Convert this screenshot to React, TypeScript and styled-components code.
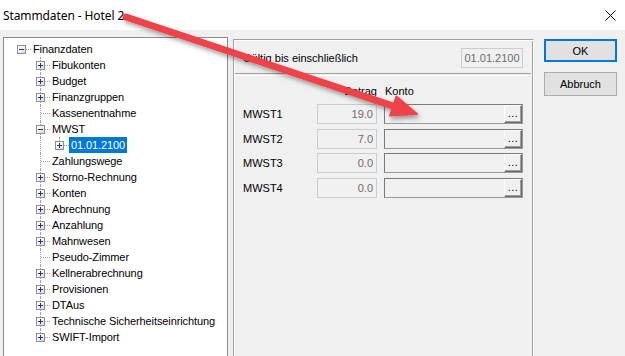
import React from "react";
import styled, { createGlobalStyle } from "styled-components";

const Global = createGlobalStyle`
  html, body { margin: 0; padding: 0; }
  body {
    width: 625px; height: 356px; overflow: hidden;
    background: #f0f0f0;
    font-family: "Liberation Sans", Arial, sans-serif;
    font-size: 11px; color: #000;
  }
`;

const Window = styled.div`
  position: relative;
  width: 625px;
  height: 356px;
  overflow: hidden;
  background: #f0f0f0;
`;

const TitleBar = styled.div`
  height: 30px;
  background: #fff;
  display: flex;
  align-items: center;
  justify-content: space-between;
  padding: 0 9px 0 3px;
`;

const Title = styled.span`
  font-family: "Noto Sans", "Open Sans", sans-serif;
  font-size: 12px;
  color: #000;
  letter-spacing: -0.1px;
`;

const CloseBtn = styled.div`
  width: 12px;
  height: 12px;
  display: flex;
  align-items: center;
  justify-content: center;
`;

const Body = styled.div`
  display: flex;
  align-items: flex-start;
  padding-left: 3px;
`;

const TreePanel = styled.div`
  box-sizing: border-box;
  width: 225px;
  height: 340px;
  margin-top: 7px;
  background: #fff;
  border: 1px solid #8c8c8c;
  padding-top: 3px;
  flex: none;
`;

const TreeRow = styled.div`
  display: flex;
  height: 16px;
  padding-left: 8px;
`;

const Indent = styled.div<{ $line: boolean }>`
  position: relative;
  width: 19px;
  height: 16px;
  flex: none;
  &::before {
    content: "";
    display: ${(p) => (p.$line ? "block" : "none")};
    position: absolute;
    left: 9px;
    top: 0;
    height: 16px;
    border-left: 1px dotted #a0a0a0;
  }
`;

const Gutter = styled.div<{ $vertical: "none" | "full" | "half" }>`
  position: relative;
  width: 19px;
  height: 16px;
  flex: none;
  &::before {
    content: "";
    display: ${(p) => (p.$vertical === "none" ? "none" : "block")};
    position: absolute;
    left: 9px;
    top: 0;
    height: ${(p) => (p.$vertical === "half" ? "8px" : "16px")};
    border-left: 1px dotted #a0a0a0;
  }
  &::after {
    content: "";
    position: absolute;
    left: 10px;
    top: 8px;
    width: 9px;
    border-top: 1px dotted #a0a0a0;
  }
`;

const ExpandBox = styled.span<{ $open: boolean }>`
  position: absolute;
  left: 5px;
  top: 4px;
  width: 9px;
  height: 9px;
  box-sizing: border-box;
  border: 1px solid #8f8f8f;
  background: linear-gradient(135deg, #ffffff 0%, #f2f2f2 50%, #d6d6d6 100%);
  z-index: 1;
  &::before {
    content: "";
    position: absolute;
    left: 1px;
    top: 3px;
    width: 5px;
    height: 1px;
    background: #1f3a7a;
  }
  &::after {
    content: "";
    display: ${(p) => (p.$open ? "none" : "block")};
    position: absolute;
    left: 3px;
    top: 1px;
    width: 1px;
    height: 5px;
    background: #1f3a7a;
  }
`;

const TreeLabel = styled.span<{ $selected?: boolean }>`
  height: 16px;
  line-height: 16px;
  padding: 0 2px;
  white-space: nowrap;
  letter-spacing: -0.1px;
  background: ${(p) => (p.$selected ? "#0078d7" : "transparent")};
  color: ${(p) => (p.$selected ? "#fff" : "#000")};
`;

const Panel = styled.div`
  box-sizing: border-box;
  width: 301px;
  height: 330px;
  margin-top: 9px;
  margin-left: 5px;
  flex: none;
  border: 1px solid;
  border-color: #a0a0a0 #ffffff #ffffff #a0a0a0;
  box-shadow: inset 1px 1px #ffffff, inset -1px -1px #a0a0a0;
  padding: 8px 10px 0 9px;
`;

const HeaderRow = styled.div`
  display: flex;
  align-items: center;
  justify-content: space-between;
  height: 20px;
`;

const DisabledField = styled.div<{ $w: number; $center?: boolean }>`
  box-sizing: border-box;
  width: ${(p) => p.$w}px;
  height: 20px;
  border: 1px solid #cccccc;
  background: #f0f0f0;
  color: #6d6d6d;
  line-height: 18px;
  text-align: ${(p) => (p.$center ? "center" : "right")};
  padding-right: ${(p) => (p.$center ? "0" : "3px")};
`;

const Separator = styled.div`
  margin: 5px -8px 0 -8px;
  height: 1px;
  border-top: 1px solid #a0a0a0;
  border-bottom: 1px solid #ffffff;
`;

const Grid = styled.div`
  display: grid;
  grid-template-columns: 67px 60px 139px;
  column-gap: 7px;
  row-gap: 4.7px;
  grid-auto-rows: 20px;
  align-items: center;
`;

const ColHeads = styled(Grid)`
  margin-top: 8px;
  grid-auto-rows: 14px;
  margin-bottom: 6px;
`;

const ColHead = styled.span<{ $right?: boolean }>`
  line-height: 14px;
  text-align: ${(p) => (p.$right ? "right" : "left")};
  padding-left: ${(p) => (p.$right ? "0" : "1px")};
`;

const RowLabel = styled.span`
  line-height: 20px;
`;

const KontoField = styled.div`
  box-sizing: border-box;
  height: 20px;
  display: flex;
  justify-content: flex-end;
  border: 1px solid;
  border-color: #7a7a7a #9a9a9a #9a9a9a #7a7a7a;
  background: #f0f0f0;
`;

const DotsButton = styled.div`
  box-sizing: border-box;
  width: 18px;
  height: 18px;
  background: #f0f0f0;
  border: 1px solid;
  border-color: #ffffff #696969 #696969 #ffffff;
  box-shadow: inset -1px -1px #a0a0a0;
  font-size: 11px;
  line-height: 14px;
  text-align: center;
  letter-spacing: 0.5px;
  color: #000;
`;

const ButtonCol = styled.div`
  display: flex;
  flex-direction: column;
  gap: 10px;
  margin-top: 9px;
  margin-left: 10px;
`;

const DlgButton = styled.div<{ $default?: boolean }>`
  box-sizing: border-box;
  width: 73px;
  height: ${(p) => (p.$default ? "23px" : "24px")};
  background: #e1e1e1;
  border: ${(p) => (p.$default ? "2px solid #0078d7" : "1px solid #adadad")};
  display: flex;
  align-items: center;
  justify-content: center;
  font-size: 11px;
`;

const ArrowLayer = styled.svg`
  position: absolute;
  left: 0;
  top: 0;
  pointer-events: none;
`;

type Node = {
  label: string;
  box?: "plus" | "minus";
  last?: boolean;
  selected?: boolean;
  cont: boolean[];
};

const L1 = [false];

const tree: Node[] = [
  { label: "Finanzdaten", box: "minus", last: true, cont: [] },
  { label: "Fibukonten", box: "plus", cont: L1 },
  { label: "Budget", box: "plus", cont: L1 },
  { label: "Finanzgruppen", box: "plus", cont: L1 },
  { label: "Kassenentnahme", cont: L1 },
  { label: "MWST", box: "minus", cont: L1 },
  { label: "01.01.2100", box: "plus", last: true, selected: true, cont: [false, true] },
  { label: "Zahlungswege", cont: L1 },
  { label: "Storno-Rechnung", box: "plus", cont: L1 },
  { label: "Konten", box: "plus", cont: L1 },
  { label: "Abrechnung", box: "plus", cont: L1 },
  { label: "Anzahlung", box: "plus", cont: L1 },
  { label: "Mahnwesen", box: "plus", cont: L1 },
  { label: "Pseudo-Zimmer", cont: L1 },
  { label: "Kellnerabrechnung", box: "plus", cont: L1 },
  { label: "Provisionen", box: "plus", cont: L1 },
  { label: "DTAus", box: "plus", cont: L1 },
  { label: "Technische Sicherheitseinrichtung", box: "plus", cont: L1 },
  { label: "SWIFT-Import", box: "plus", last: true, cont: L1 },
];

const rows = [
  { name: "MWST1", value: "19.0" },
  { name: "MWST2", value: "7.0" },
  { name: "MWST3", value: "0.0" },
  { name: "MWST4", value: "0.0" },
];

// Arrow geometry
const tail = { x: 126, y: 17 };
const tip = { x: 417, y: 114 };
const dx = tip.x - tail.x;
const dy = tip.y - tail.y;
const len = Math.hypot(dx, dy);
const ux = dx / len;
const uy = dy / len;
const headLen = 25;
const headHalf = 10;
const base = { x: tip.x - ux * headLen, y: tip.y - uy * headLen };
const w1 = { x: base.x - uy * headHalf, y: base.y + ux * headHalf };
const w2 = { x: base.x + uy * headHalf, y: base.y - ux * headHalf };
const lineEnd = { x: tip.x - ux * (headLen - 4), y: tip.y - uy * (headLen - 4) };

export default function App() {
  return (
    <Window>
      <Global />
      <TitleBar>
        <Title>Stammdaten - Hotel 2</Title>
        <CloseBtn>
          <svg width="11" height="11" viewBox="0 0 11 11">
            <path d="M0.5 0.5 L10.5 10.5 M10.5 0.5 L0.5 10.5" stroke="#000" strokeWidth="1" />
          </svg>
        </CloseBtn>
      </TitleBar>
      <Body>
        <TreePanel>
          {tree.map((n, i) => (
            <TreeRow key={i}>
              {n.cont.map((c, j) => (
                <Indent key={j} $line={c} />
              ))}
              <Gutter $vertical={n.cont.length === 0 ? "none" : n.last ? "half" : "full"}>
                {n.box && <ExpandBox $open={n.box === "minus"} />}
              </Gutter>
              <TreeLabel $selected={n.selected}>{n.label}</TreeLabel>
            </TreeRow>
          ))}
        </TreePanel>
        <Panel>
          <HeaderRow>
            <span>Gültig bis einschließlich</span>
            <DisabledField $w={62} $center>
              01.01.2100
            </DisabledField>
          </HeaderRow>
          <Separator />
          <ColHeads>
            <span />
            <ColHead $right>Betrag</ColHead>
            <ColHead>Konto</ColHead>
          </ColHeads>
          <Grid>
            {rows.map((r) => (
              <React.Fragment key={r.name}>
                <RowLabel>{r.name}</RowLabel>
                <DisabledField $w={60}>{r.value}</DisabledField>
                <KontoField>
                  <DotsButton>...</DotsButton>
                </KontoField>
              </React.Fragment>
            ))}
          </Grid>
        </Panel>
        <ButtonCol>
          <DlgButton $default>OK</DlgButton>
          <DlgButton>Abbruch</DlgButton>
        </ButtonCol>
      </Body>
      <ArrowLayer width="625" height="356" viewBox="0 0 625 356">
        <defs>
          <filter id="shadow" x="-10%" y="-10%" width="130%" height="150%">
            <feDropShadow dx="1.5" dy="3" stdDeviation="2" floodColor="#000" floodOpacity="0.35" />
          </filter>
        </defs>
        <g filter="url(#shadow)">
          <line
            x1={tail.x}
            y1={tail.y}
            x2={lineEnd.x}
            y2={lineEnd.y}
            stroke="#f0434a"
            strokeWidth="7"
            strokeLinecap="round"
          />
          <polygon
            points={`${tip.x},${tip.y} ${w1.x},${w1.y} ${w2.x},${w2.y}`}
            fill="#f0434a"
            stroke="#f0434a"
            strokeWidth="2"
            strokeLinejoin="round"
          />
        </g>
      </ArrowLayer>
    </Window>
  );
}
